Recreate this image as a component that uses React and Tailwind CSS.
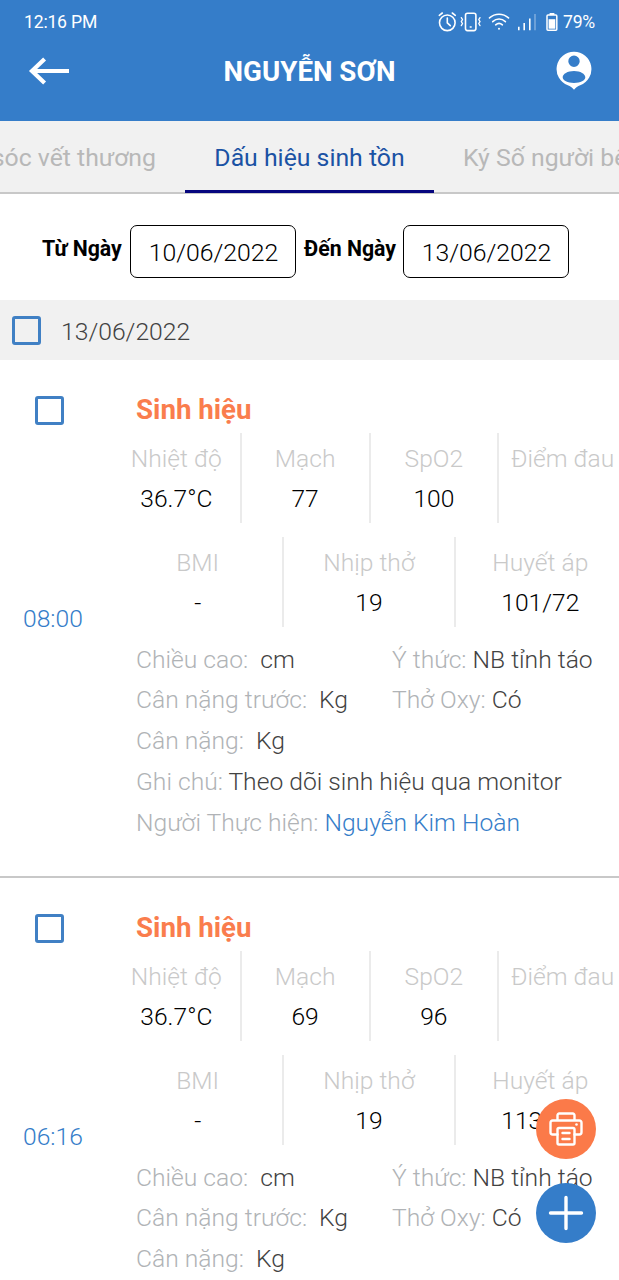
const entries = [
  { time: '08:00', temp: '36.7°C', pulse: '77', spo2: '100', bmi: '-', breath: '19', pressure: '101/72' },
  { time: '06:16', temp: '36.7°C', pulse: '69', spo2: '96', bmi: '-', breath: '19', pressure: '113/68' },
];

function StatusIcons() {
  return (
    <svg width="100" height="22" viewBox="0 0 100 22" fill="none" stroke="white" strokeWidth="1.6" strokeLinecap="round">
      <circle cx="9.3" cy="11.8" r="7.8" />
      <path d="M9.3 7v4.8l3 2.8M1.3 4.300l3-2.300M17.300 4.300l-3-2.300" />
      <rect x="27.5" y="2.2" width="10.4" height="17.4" rx="2" />
      <path d="M32.2 16h1" strokeWidth="1.4" />
      <path d="M23.3 6.6l1.2 2-1.2 2 1.2 2-1.2 2M42 6.6l-1.2 2 1.2 2-1.2 2 1.2 2" strokeWidth="1.3" />
      <path d="M51.5 6.9c5.5-4.9 13.5-4.9 19 0M54.7 10.6c3.8-3.4 8.900-3.400 12.700 0M57.7 13.8c2-1.8 4.700-1.800 6.700 0" />
      <circle cx="61" cy="17.7" r="1" fill="white" stroke="none" />
      <path d="M80.8 15.8v3.4M86.2 12v7.2M91.8 7.6v11.6" strokeWidth="1.6" strokeLinecap="butt" />
      <path d="M97 3v16.2" strokeWidth="1.6" opacity=".35" strokeLinecap="butt" />
    </svg>
  );
}

function BatteryIcon() {
  return (
    <svg className="ml-[8px]" width="12" height="22" viewBox="0 0 12 22" fill="none">
      <rect x="3.6" y="2" width="4.8" height="2" fill="white" />
      <rect x="1" y="4" width="9.8" height="15.2" rx="1" stroke="white" strokeWidth="1.5" />
      <rect x="2.6" y="8.2" width="6.7" height="9.5" fill="white" />
    </svg>
  );
}

function BackIcon() {
  return (
    <svg width="42" height="28" viewBox="0 0 42 28" fill="none" stroke="white" strokeWidth="4.2">
      <path d="M3.5 14H41M16.6 2L4 14l12.6 12" />
    </svg>
  );
}

function ProfileIcon() {
  return (
    <svg width="36" height="40" viewBox="0 0 36 40">
      <path
        fill="white"
        fillRule="evenodd"
        d="M18 .8a17.3 17.3 0 0 0-6.200 33.500c2.400 1 4.400 2.300 6.200 4.500 1.800-2.200 3.800-3.500 6.200-4.500A17.300 17.300 0 0 0 18 .8ZM18 4.600a5.700 5.700 0 1 1 0 11.400 5.700 5.700 0 0 1 0-11.400ZM18 20c6.500 0 11.300 3 11.300 6.300S24.500 32 18 32 6.700 29.600 6.700 26.300 11.500 20 18 20Z"
      />
    </svg>
  );
}

function PrinterIcon() {
  return (
    <svg width="34" height="34" viewBox="0 0 34 34" fill="none" stroke="white" strokeWidth="2.4" strokeLinecap="round" strokeLinejoin="round">
      <path d="M8.500 7.500V3.200a1.700 1.700 0 0 1 1.700-1.700h13.600a1.700 1.700 0 0 1 1.700 1.700v4.300" />
      <path d="M8.500 22.500H3.700a2.200 2.200 0 0 1-2.200-2.200V10.700a2.200 2.200 0 0 1 2.200-2.200h26.600a2.200 2.200 0 0 1 2.200 2.200v9.600a2.200 2.200 0 0 1-2.200 2.200h-4.800" />
      <rect x="8.500" y="16" width="17" height="16.500" rx="1.500" />
      <path d="M13.500 21h7M13.500 27h7" />
      <circle cx="27.500" cy="12.500" r="1.300" fill="white" stroke="none" />
    </svg>
  );
}

function Checkbox() {
  return <span className="block size-[29px] shrink-0 rounded-[3px] border-3 border-[#4080c4]" />;
}

function Cell({ label, value }) {
  return (
    <div className="flex min-w-0 flex-1 flex-col items-center border-r-2 border-[#ebebeb] pt-[6px] text-[24.600px] last:border-r-0">
      <div className="h-10 leading-10 text-[#c9c9c9]">{label}</div>
      <div className="h-10 leading-10 text-black">{value}</div>
    </div>
  );
}

function Detail({ label, value, accent }) {
  return (
    <div className="leading-[40.800px] whitespace-pre">
      <span className="text-[#b0b3b6]">{label}</span>
      <span className={accent ? 'text-[#357dc9]' : 'text-[#424242]'}>{value}</span>
    </div>
  );
}

function Entry({ e }) {
  return (
    <section className="flex h-[518px] shrink-0 border-b-2 border-[#c8c8c8] text-[24.650px] font-light">
      <div className="flex w-[113px] shrink-0 flex-col pt-9 pl-[35px]">
        <Checkbox />
        <div className="-ml-3 pt-[174px] leading-10 text-[#357dc9]">{e.time}</div>
      </div>
      <div className="w-[515px] shrink-0 pt-[30px]">
        <h2 className="pl-[23px] text-[27.700px] leading-10 font-bold text-[#fa7d4d]">Sinh hiệu</h2>
        <div className="mt-[3px] flex h-[90px] w-[513px]">
          <Cell label="Nhiệt độ" value={e.temp} />
          <Cell label="Mạch" value={e.pulse} />
          <Cell label="SpO2" value={e.spo2} />
          <Cell label="Điểm đau" value="" />
        </div>
        <div className="mt-[14px] flex h-[90px] w-[512px]">
          <Cell label="BMI" value={e.bmi} />
          <Cell label="Nhịp thở" value={e.breath} />
          <Cell label="Huyết áp" value={e.pressure} />
        </div>
        <div className="mt-[12.700px] grid grid-cols-[256px_1fr] pl-[23px]">
          <Detail label="Chiều cao:  " value="cm" />
          <Detail label="Ý thức: " value="NB tỉnh táo" />
          <Detail label="Cân nặng trước:  " value="Kg" />
          <Detail label="Thở Oxy: " value="Có" />
        </div>
        <div className="pl-[23px]">
          <Detail label="Cân nặng:  " value="Kg" />
          <Detail label="Ghi chú: " value="Theo dõi sinh hiệu qua monitor" />
          <Detail label="Người Thực hiện: " value="Nguyễn Kim Hoàn" accent />
        </div>
      </div>
    </section>
  );
}

function DateField({ value }) {
  return (
    <div className="mt-[31px] flex h-[53px] w-[166px] items-center justify-center rounded-[7px] border-[1.500px] border-black pt-[2px] pl-px text-[24.800px] font-light">
      {value}
    </div>
  );
}

export default function App() {
  return (
    <div className="relative flex h-[1280px] w-[619px] flex-col overflow-hidden bg-white font-['Roboto',sans-serif] whitespace-nowrap text-black">
      <header className="h-[121px] shrink-0 bg-[#357dc9] text-white">
        <div className="flex h-[44px] items-center pr-[24px] pl-6 text-[17.600px] tracking-[-0.200px]">
          <span className="flex-1 pt-px">12:16 PM</span>
          <StatusIcons />
          <BatteryIcon />
          <span className="ml-[5px] pt-px">79%</span>
        </div>
        <div className="flex h-[54px] items-center justify-between pr-[27px] pl-7">
          <BackIcon />
          <h1 className="-ml-[7px] pt-[2px] text-[27.700px] font-bold">NGUYỄN SƠN</h1>
          <ProfileIcon />
        </div>
      </header>

      <nav className="flex h-[73px] shrink-0 border-b-2 border-[#c8c8c8] bg-[#f1f1f1] text-[24.800px] text-[#b8b8b8]">
        <div className="flex w-[185px] shrink-0 items-center justify-end pt-[2px] pr-[29px]">sóc vết thương</div>
        <div className="flex h-[72px] w-[249px] shrink-0 items-center justify-center border-b-3 border-[#06067e] pt-[5px] text-[#1b52a4]">Dấu hiệu sinh tồn</div>
        <div className="flex items-center pt-[2px] pl-[29px]">Ký Số người bệnh</div>
      </nav>

      <div className="flex h-[106px] shrink-0 pl-[42px]">
        <div className="w-[88px] pt-[39px] text-[21.300px] leading-8 font-bold">Từ Ngày</div>
        <DateField value="10/06/2022" />
        <div className="w-[107px] pt-[39px] pl-2 text-[21.300px] leading-8 font-bold">Đến Ngày</div>
        <DateField value="13/06/2022" />
      </div>

      <div className="flex h-[60px] shrink-0 items-center bg-[#f1f1f1] pl-3 text-[24.700px] font-light text-[#424242]">
        <Checkbox />
        <span className="pt-[3px] pl-5">13/06/2022</span>
      </div>

      <main className="flex flex-col">
        {entries.map((e) => (
          <Entry key={e.time} e={e} />
        ))}
      </main>

      <div className="absolute top-[1099px] left-[536px] flex flex-col gap-[24px]">
        <button className="flex size-[60px] items-center justify-center rounded-full bg-[#fb7a49]">
          <PrinterIcon />
        </button>
        <button className="flex size-[60px] items-center justify-center rounded-full bg-[#357dc9]">
          <svg width="36" height="36" viewBox="0 0 36 36" stroke="white" strokeWidth="3.400" strokeLinecap="round">
            <path d="M18 2.500v31M2.500 18h31" />
          </svg>
        </button>
      </div>
    </div>
  );
}
